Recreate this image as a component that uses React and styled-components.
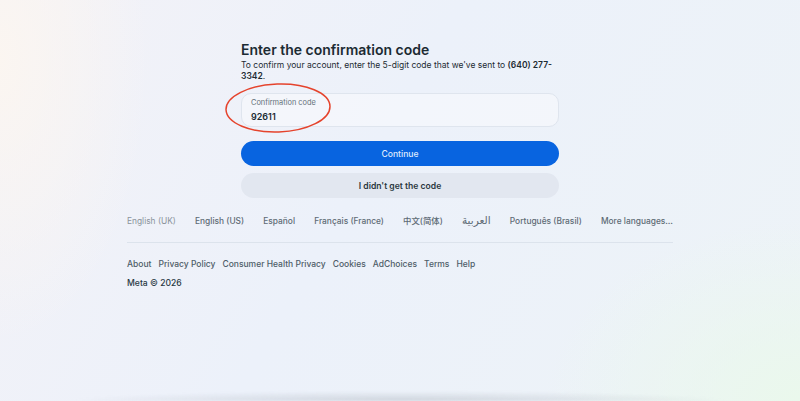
import React from "react";
import styled, { createGlobalStyle } from "styled-components";

const Global = createGlobalStyle`
  html, body { margin: 0; padding: 0; }
  body {
    font-family: Inter, "Noto Sans", "Liberation Sans", sans-serif;
    -webkit-font-smoothing: antialiased;
  }
`;

const Page = styled.div`
  position: relative;
  width: 800px;
  height: 401px;
  overflow: hidden;
  display: flex;
  flex-direction: column;
  align-items: center;
  padding-top: 41px;
  box-sizing: border-box;
  background:
    radial-gradient(ellipse 200px 380px at 0% 15%, rgba(252, 246, 240, 0.9), rgba(252, 246, 240, 0) 75%),
    radial-gradient(ellipse 340px 240px at 100% 100%, rgba(234, 248, 236, 1), rgba(234, 248, 236, 0) 75%),
    linear-gradient(120deg, #f3f2f7 0%, #ecf1fa 45%, #edf3f7 100%);
  color: #1c2b33;
`;

const Main = styled.main`
  width: 318px;
  display: flex;
  flex-direction: column;
`;

const Title = styled.h1`
  margin: 0;
  font-size: 14px;
  line-height: 18px;
  font-weight: 600;
  color: #1c2b33;
`;

const Sub = styled.p`
  margin: 1px 0 0;
  font-size: 8.5px;
  line-height: 11px;
  color: #1c2b33;
  b { font-weight: 600; }
`;

const FieldWrap = styled.div`
  position: relative;
  margin-top: 11px;
`;

const Field = styled.div`
  height: 34px;
  box-sizing: border-box;
  border: 1px solid #dfe5ee;
  border-radius: 10px;
  background: rgba(246, 248, 252, 0.7);
  padding: 4px 9px 0;
  display: flex;
  flex-direction: column;
`;

const Label = styled.span`
  font-size: 7.4px;
  line-height: 10px;
  color: #65717a;
`;

const Value = styled.span`
  margin-top: 3px;
  font-size: 9px;
  line-height: 12px;
  font-weight: 600;
  color: #1c2b33;
`;

const Circle = styled.svg`
  position: absolute;
  left: -16px;
  top: -10px;
  width: 106px;
  height: 50px;
  overflow: visible;
  pointer-events: none;
`;

const Button = styled.button`
  display: block;
  width: 100%;
  height: 25px;
  border: none;
  border-radius: 13px;
  margin-top: ${(p) => p.$gap}px;
  font-family: inherit;
  font-size: 8.6px;
  font-weight: ${(p) => (p.$primary ? 500 : 600)};
  background: ${(p) => (p.$primary ? "#0864e0" : "#e2e7f0")};
  color: ${(p) => (p.$primary ? "#dfeafd" : "#2b3840")};
`;

const Footer = styled.footer`
  width: 546px;
  margin-top: 17px;
  display: flex;
  flex-direction: column;
`;

const Langs = styled.ul`
  list-style: none;
  margin: 0;
  padding: 0 0 15px;
  display: flex;
  justify-content: space-between;
  align-items: center;
  border-bottom: 1px solid #dce3ec;
`;

const Lang = styled.li`
  font-size: ${(p) => (p.$rtl ? "10.5px" : "8.4px")};
  line-height: 12px;
  font-weight: ${(p) => (p.$current ? 400 : 500)};
  color: ${(p) => (p.$current ? "#8a939b" : "#5e6b75")};
  font-family: Inter, "Noto Sans", "Noto Sans CJK SC", "DejaVu Sans", sans-serif;
`;

const Links = styled.ul`
  list-style: none;
  margin: 15px 0 0;
  padding: 0;
  display: flex;
  gap: 7px;
`;

const LinkItem = styled.li`
  font-size: 8.5px;
  line-height: 12px;
  font-weight: 500;
  color: #4e5d68;
`;

const Copy = styled.div`
  margin-top: 7px;
  font-size: 8.6px;
  line-height: 12px;
  font-weight: 500;
  color: #2a3a44;
`;

const Shade = styled.div`
  margin-top: auto;
  width: 660px;
  height: 10px;
  background: radial-gradient(ellipse 50% 100% at 50% 100%, rgba(150, 158, 168, 0.35), rgba(150, 158, 168, 0) 100%);
  filter: blur(1px);
`;

const langs = [
  "English (UK)",
  "English (US)",
  "Español",
  "Français (France)",
  "中文(简体)",
  "العربية",
  "Português (Brasil)",
  "More languages…",
];

const links = [
  "About",
  "Privacy Policy",
  "Consumer Health Privacy",
  "Cookies",
  "AdChoices",
  "Terms",
  "Help",
];

export default function App() {
  return (
    <>
      <Global />
      <Page>
        <Main>
          <Title>Enter the confirmation code</Title>
          <Sub>
            To confirm your account, enter the 5-digit code that we've sent to <b>(640) 277-3342</b>.
          </Sub>
          <FieldWrap>
            <Field>
              <Label>Confirmation code</Label>
              <Value>92611</Value>
            </Field>
            <Circle viewBox="0 0 106 50">
              <ellipse
                cx="53"
                cy="25"
                rx="52"
                ry="24"
                fill="none"
                stroke="#e5432c"
                strokeWidth="1.5"
                transform="rotate(-2 53 25)"
              />
            </Circle>
          </FieldWrap>
          <Button $primary $gap={14}>Continue</Button>
          <Button $gap={7}>I didn't get the code</Button>
        </Main>
        <Footer>
          <Langs>
            {langs.map((l, i) => (
              <Lang key={l} $current={i === 0} $rtl={i === 5} dir={i === 5 ? "rtl" : undefined}>
                {l}
              </Lang>
            ))}
          </Langs>
          <Links>
            {links.map((l) => (
              <LinkItem key={l}>{l}</LinkItem>
            ))}
          </Links>
          <Copy>Meta © 2026</Copy>
        </Footer>
        <Shade />
      </Page>
    </>
  );
}
